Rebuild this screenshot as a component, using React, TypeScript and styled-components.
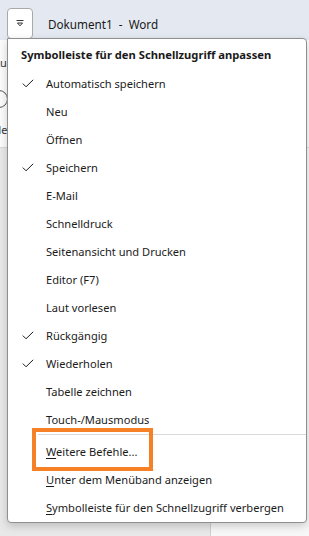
import React from 'react';
import styled, { createGlobalStyle } from 'styled-components';

const GlobalStyle = createGlobalStyle`
    html, body {
        margin: 0;
        padding: 0;
        background: #ffffff;
    }
    body {
        font-family: "Segoe UI", "Noto Sans", "Liberation Sans", sans-serif;
        color: #1b1b1b;
    }
`;

type MenuEntry = {
    label: string;
    checked?: boolean;
};

const quickItems: MenuEntry[] = [
    { label: 'Automatisch speichern', checked: true },
    { label: 'Neu' },
    { label: 'Öffnen' },
    { label: 'Speichern', checked: true },
    { label: 'E-Mail' },
    { label: 'Schnelldruck' },
    { label: 'Seitenansicht und Drucken' },
    { label: 'Editor (F7)' },
    { label: 'Laut vorlesen' },
    { label: 'Rückgängig', checked: true },
    { label: 'Wiederholen', checked: true },
    { label: 'Tabelle zeichnen' },
    { label: 'Touch-/Mausmodus' },
];

const CheckIcon = () => (
    <svg width="12" height="9" viewBox="0 0 12 9">
        <path d="M0.8 4.6 L4 7.8 L11.2 0.8" fill="none" stroke="#1b1b1b" strokeWidth="1" />
    </svg>
);

const CustomizeIcon = () => (
    <svg width="10" height="8" viewBox="0 0 10 8">
        <path d="M1.5 1.5 H8.5" stroke="#333" strokeWidth="1" />
        <path d="M2.5 4 L7.5 4 L5 6.8 Z" fill="none" stroke="#333" strokeWidth="1" strokeLinejoin="round" />
    </svg>
);

export default function App() {
    return (
        <Page>
            <GlobalStyle />
            <TitleBar>
                <QuickButton><CustomizeIcon /></QuickButton>
                <Title>Dokument1&nbsp; - &nbsp;Word</Title>
            </TitleBar>
            <Ribbon>
                <RibbonText>Au</RibbonText>
                <RibbonCircle />
                <RibbonText>Ne</RibbonText>
            </Ribbon>
            <Workspace>
                <DocPage />
            </Workspace>

            <Menu>
                <MenuHeader>Symbolleiste für den Schnellzugriff anpassen</MenuHeader>
                {quickItems.map((item) => (
                    <MenuItem key={item.label}>
                        <CheckSlot>{item.checked && <CheckIcon />}</CheckSlot>
                        <ItemLabel>{item.label}</ItemLabel>
                    </MenuItem>
                ))}
                <Separator />
                <MenuItem>
                    <CheckSlot />
                    <ItemLabel>
                        <AccessKey>W</AccessKey>eitere Befehle...
                        <Highlight />
                    </ItemLabel>
                </MenuItem>
                <MenuItem>
                    <CheckSlot />
                    <ItemLabel><AccessKey>U</AccessKey>nter dem Menüband anzeigen</ItemLabel>
                </MenuItem>
                <MenuItem>
                    <CheckSlot />
                    <ItemLabel><AccessKey>S</AccessKey>ymbolleiste für den Schnellzugriff verbergen</ItemLabel>
                </MenuItem>
            </Menu>
        </Page>
    );
}

const Page = styled.div`
    position: relative;
    width: 309px;
    height: 536px;
    overflow: hidden;
    display: flex;
    flex-direction: column;
    background: #e8e8e8;
`;

const TitleBar = styled.div`
    height: 40px;
    flex-shrink: 0;
    display: flex;
    align-items: flex-start;
    gap: 15px;
    padding: 8px 0 0 7px;
    box-sizing: border-box;
    background: #e4e9f1;
`;

const QuickButton = styled.div`
    width: 26px;
    height: 31px;
    box-sizing: border-box;
    display: flex;
    align-items: center;
    justify-content: center;
    padding-bottom: 1px;
    background: #ffffff;
    border: 1px solid #a9a9a9;
    border-radius: 4px;
`;

const Title = styled.div`
    font-size: 11.7px;
    line-height: 16px;
    padding-top: 8px;
    color: #1a1a1a;
`;

const Ribbon = styled.div`
    height: 108px;
    flex-shrink: 0;
    display: flex;
    flex-direction: column;
    gap: 20px;
    padding-top: 15px;
    box-sizing: border-box;
    background: #fbfbfb;
    border-bottom: 1px solid #d8d8d8;
`;

const RibbonText = styled.div`
    font-size: 11px;
    margin-left: -7px;
    color: #333;
`;

const RibbonCircle = styled.div`
    width: 16px;
    height: 16px;
    margin: 0 0 -6px -10px;
    border: 1px solid #555;
    border-radius: 50%;
`;

const Workspace = styled.div`
    flex: 1;
    display: flex;
    justify-content: flex-end;
    background: #e8e8e8;
`;

const DocPage = styled.div`
    width: 98px;
    background: #f7f7f7;
    border-left: 1px solid #cfcfcf;
`;

const Menu = styled.div`
    position: absolute;
    left: 7px;
    top: 38px;
    width: 300px;
    box-sizing: border-box;
    padding-bottom: 1px;
    background: #ffffff;
    border: 1px solid #8f8f8f;
    border-radius: 0 4px 4px 4px;
    box-shadow: 0 3px 8px rgba(0, 0, 0, 0.18);
`;

const MenuHeader = styled.div`
    height: 30px;
    display: flex;
    align-items: center;
    padding-left: 13px;
    font-size: 11.2px;
    font-weight: 700;
    color: #1a1a1a;
`;

const MenuItem = styled.div`
    height: 28px;
    display: flex;
    align-items: center;
    font-size: 11.1px;
    color: #1b1b1b;
`;

const CheckSlot = styled.div`
    width: 38px;
    padding-left: 14px;
    box-sizing: border-box;
    display: flex;
    align-items: center;
`;

const ItemLabel = styled.span`
    position: relative;
    white-space: nowrap;
`;

const AccessKey = styled.span`
    text-decoration: underline;
    text-underline-offset: 2px;
`;

const Highlight = styled.span`
    position: absolute;
    left: -14px;
    right: -16px;
    top: -16px;
    bottom: -12px;
    border: 4px solid #f58025;
    pointer-events: none;
`;

const Separator = styled.div`
    height: 1px;
    margin: 1px 0 2px 30px;
    background: #d9d9d9;
`;
